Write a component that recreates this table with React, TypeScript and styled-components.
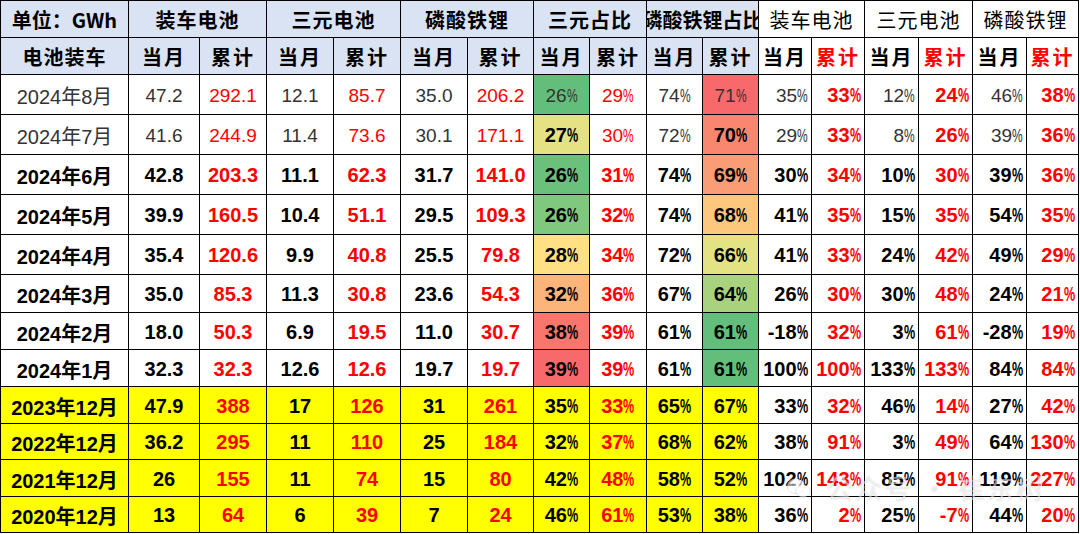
import React from "react";
import styled, { createGlobalStyle } from "styled-components";

const GlobalStyle = createGlobalStyle`
  html, body { margin: 0; padding: 0; background: #fff; }
  body { font-family: "Liberation Sans", "Noto Sans CJK SC", sans-serif; }
`;

const COLS = [127, 70, 66, 66, 66, 66, 65, 55, 56, 55, 55, 52, 52, 53, 53, 53, 51];
const ROWS = [36, 36, 39, 39, 39, 39, 39, 37, 36, 36, 36, 35, 36, 35];

const LAV = "#DAE3F3";
const YEL = "#FFFF00";
const RED = "#FF0000";

const Wrap = styled.div`
  position: relative;
  width: 1080px;
  height: 534px;
`;

const Grid = styled.div`
  display: grid;
  grid-template-columns: ${COLS.map((c) => `${c}px`).join(" ")};
  grid-template-rows: ${ROWS.map((r) => `${r}px`).join(" ")};
  gap: 1px;
  padding: 1px;
  background: #000;
  width: max-content;
`;

const Cell = styled.div<{
  $bg?: string;
  $color?: string;
  $bold?: boolean;
  $align?: "center" | "right";
  $span?: number;
  $size?: number;
}>`
  display: flex;
  align-items: center;
  justify-content: ${(p) => (p.$align === "right" ? "flex-end" : "center")};
  padding: 2px ${(p) => (p.$align === "right" ? "3px" : "0")} 0 0;
  box-sizing: border-box;
  overflow: hidden;
  white-space: nowrap;
  background: ${(p) => p.$bg || "#fff"};
  color: ${(p) => p.$color || "#000"};
  font-weight: ${(p) => (p.$bold ? 700 : 400)};
  font-size: ${(p) => p.$size || 20}px;
  grid-column: span ${(p) => p.$span || 1};
  font-family: "Liberation Sans", "Noto Sans CJK SC", sans-serif;
`;

const HeadText = styled.span<{ $spacing?: number }>`
  font-family: "Noto Sans CJK SC", sans-serif;
  letter-spacing: ${(p) => p.$spacing || 0}px;
  line-height: 1;
`;

const PctSign = styled.span`
  display: inline-block;
  width: 0.57em;
  transform: scaleX(0.63);
  transform-origin: 0 50%;
`;

const Watermark = styled.div`
  position: absolute;
  left: 786px;
  top: 468px;
  display: flex;
  align-items: center;
  gap: 14px;
  font-family: "Noto Sans CJK SC", sans-serif;
  font-size: 27px;
  color: rgba(255, 255, 255, 0.55);
  text-shadow: 0 0 1px rgba(0, 0, 0, 0.12), 0 0 3px rgba(0, 0, 0, 0.06);
  pointer-events: none;
  letter-spacing: 2px;
`;

const Val = ({ v }: { v: string }) => {
  if (v.endsWith("%")) {
    return (
      <>
        {v.slice(0, -1)}
        <PctSign>%</PctSign>
      </>
    );
  }
  return <>{v}</>;
};

type RowData = {
  label: string;
  vals: string[];
  kind: "light" | "bold" | "yellow";
  boldCols?: number[];
};

const scale1 = ["#63BE7B", "#E5E283", "#6BC17C", "#7FC87E", "#FFE084", "#FBB479", "#F8766D", "#F8696B"];
const scale2 = ["#F8696B", "#F98770", "#FA9C75", "#FDC77E", "#E4E383", "#A9D27F", "#63BE7B", "#63BE7B"];

const data: RowData[] = [
  { label: "2024年8月", kind: "light", vals: ["47.2", "292.1", "12.1", "85.7", "35.0", "206.2", "26%", "29%", "74%", "71%", "35%", "33%", "12%", "24%", "46%", "38%"] },
  { label: "2024年7月", kind: "light", boldCols: [7, 10], vals: ["41.6", "244.9", "11.4", "73.6", "30.1", "171.1", "27%", "30%", "72%", "70%", "29%", "33%", "8%", "26%", "39%", "36%"] },
  { label: "2024年6月", kind: "bold", vals: ["42.8", "203.3", "11.1", "62.3", "31.7", "141.0", "26%", "31%", "74%", "69%", "30%", "34%", "10%", "30%", "39%", "36%"] },
  { label: "2024年5月", kind: "bold", vals: ["39.9", "160.5", "10.4", "51.1", "29.5", "109.3", "26%", "32%", "74%", "68%", "41%", "35%", "15%", "35%", "54%", "35%"] },
  { label: "2024年4月", kind: "bold", vals: ["35.4", "120.6", "9.9", "40.8", "25.5", "79.8", "28%", "34%", "72%", "66%", "41%", "33%", "24%", "42%", "49%", "29%"] },
  { label: "2024年3月", kind: "bold", vals: ["35.0", "85.3", "11.3", "30.8", "23.6", "54.3", "32%", "36%", "67%", "64%", "26%", "30%", "30%", "48%", "24%", "21%"] },
  { label: "2024年2月", kind: "bold", vals: ["18.0", "50.3", "6.9", "19.5", "11.0", "30.7", "38%", "39%", "61%", "61%", "-18%", "32%", "3%", "61%", "-28%", "19%"] },
  { label: "2024年1月", kind: "bold", vals: ["32.3", "32.3", "12.6", "12.6", "19.7", "19.7", "39%", "39%", "61%", "61%", "100%", "100%", "133%", "133%", "84%", "84%"] },
  { label: "2023年12月", kind: "yellow", vals: ["47.9", "388", "17", "126", "31", "261", "35%", "33%", "65%", "67%", "33%", "32%", "46%", "14%", "27%", "42%"] },
  { label: "2022年12月", kind: "yellow", vals: ["36.2", "295", "11", "110", "25", "184", "32%", "37%", "68%", "62%", "38%", "91%", "3%", "49%", "64%", "130%"] },
  { label: "2021年12月", kind: "yellow", vals: ["26", "155", "11", "74", "15", "80", "42%", "48%", "58%", "52%", "102%", "143%", "85%", "91%", "119%", "227%"] },
  { label: "2020年12月", kind: "yellow", vals: ["13", "64", "6", "39", "7", "24", "46%", "61%", "53%", "38%", "36%", "2%", "25%", "-7%", "44%", "20%"] },
];

const leftGroups = ["装车电池", "三元电池", "磷酸铁锂", "三元占比", "磷酸铁锂占比"];
const rightGroups = ["装车电池", "三元电池", "磷酸铁锂"];

const WeChatIcon = () => (
  <svg width="26" height="24" viewBox="0 0 26 24" fill="none">
    <ellipse cx="10" cy="10" rx="9" ry="7.5" fill="rgba(255,255,255,0.6)" stroke="rgba(0,0,0,0.1)" />
    <ellipse cx="17" cy="15" rx="7.5" ry="6.2" fill="rgba(255,255,255,0.6)" stroke="rgba(0,0,0,0.1)" />
    <circle cx="7" cy="8.5" r="1.2" fill="rgba(0,0,0,0.1)" />
    <circle cx="13" cy="8.5" r="1.2" fill="rgba(0,0,0,0.1)" />
  </svg>
);

export default function App() {
  return (
    <Wrap>
      <GlobalStyle />
      <Grid>
        <Cell $bg={LAV} $bold>
          <HeadText>单位：GWh</HeadText>
        </Cell>
        {leftGroups.map((g) => (
          <Cell key={"lg" + g} $bg={LAV} $bold $span={2}>
            <HeadText $spacing={g.length === 4 ? 1 : 0}>{g}</HeadText>
          </Cell>
        ))}
        {rightGroups.map((g) => (
          <Cell key={"rg" + g} $span={2}>
            <HeadText $spacing={1}>{g}</HeadText>
          </Cell>
        ))}

        <Cell $bg={LAV} $bold>
          <HeadText $spacing={1}>电池装车</HeadText>
        </Cell>
        {Array.from({ length: 10 }).map((_, i) => (
          <Cell key={"ls" + i} $bg={LAV} $bold>
            <HeadText $spacing={2}>{i % 2 === 0 ? "当月" : "累计"}</HeadText>
          </Cell>
        ))}
        {Array.from({ length: 6 }).map((_, i) => (
          <Cell key={"rs" + i} $bold $color={i % 2 === 0 ? "#000" : RED}>
            <HeadText $spacing={2}>{i % 2 === 0 ? "当月" : "累计"}</HeadText>
          </Cell>
        ))}

        {data.map((row, ri) => {
          const yellow = row.kind === "yellow";
          const light = row.kind === "light";
          const base = light ? "#333" : "#000";
          return (
            <React.Fragment key={row.label}>
              <Cell $bg={yellow ? YEL : "#fff"} $bold={!light} $color={base}>
                {row.label}
              </Cell>
              {row.vals.map((v, vi) => {
                const c = vi + 1;
                const right = c >= 11;
                let bg = "#fff";
                if (yellow && !right) bg = YEL;
                else if (!yellow && c === 7) bg = scale1[ri];
                else if (!yellow && c === 10) bg = scale2[ri];
                let red: boolean;
                if (right) red = c % 2 === 0;
                else red = c === 2 || c === 4 || c === 6 || c === 8;
                const bold = !light || (right && red) || (row.boldCols || []).includes(c);
                const color = red ? RED : bold ? "#000" : base;
                return (
                  <Cell
                    key={row.label + c}
                    $bg={bg}
                    $bold={bold}
                    $color={color}
                    $align={right ? "right" : "center"}
                    $size={light && !bold ? 19 : 20}
                  >
                    <Val v={v} />
                  </Cell>
                );
              })}
            </React.Fragment>
          );
        })}
      </Grid>
      <Watermark>
        <WeChatIcon />
        <span>公众号 · 崔东树</span>
      </Watermark>
    </Wrap>
  );
}
